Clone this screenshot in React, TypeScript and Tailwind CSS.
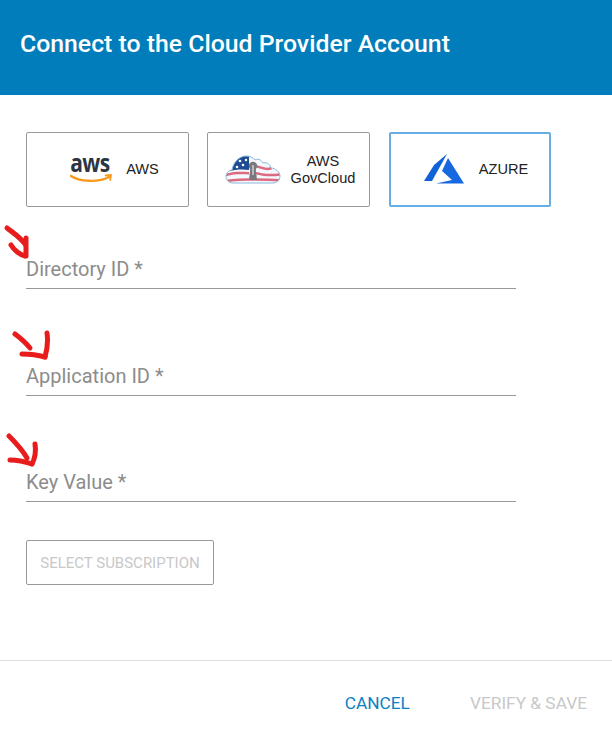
const roboto = "font-['Roboto',sans-serif]";

function AwsLogo() {
  return (
    <div className="relative w-[42px] h-[32px]">
      <span className="absolute left-0 top-[-2px] origin-bottom scale-y-[1.2] font-['Open_Sans',sans-serif] font-bold text-[21px] leading-[26px] tracking-[-0.5px] text-[#2b3544]">aws</span>
      <svg className="absolute left-0 top-[18px]" width="44" height="13" viewBox="0 0 44 13" fill="none">
        <path d="M1 4C9 9.500 28 11 39 5" stroke="#f79a1e" strokeWidth="2.400" strokeLinecap="round" />
        <path d="M35.500 3.500L41 3L40.200 8" stroke="#f79a1e" strokeWidth="1.800" strokeLinecap="round" strokeLinejoin="round" />
      </svg>
    </div>
  );
}

function GovCloudLogo() {
  return (
    <svg width="56" height="32" viewBox="0 0 56 32">
      <defs>
        <clipPath id="cloud">
          <path d="M8 29C3 29 1 25 1 22.500C1 19 4 16.500 7 16C8 9 14 2 21 2C25 2 28 3.500 30 6C32 4.500 36 5 38 9C40 8 45 9 46 14C50 14 55 18 55 22C55 27 51 29 48 29Z" />
        </clipPath>
      </defs>
      <path d="M8 29C3 29 1 25 1 22.500C1 19 4 16.500 7 16C8 9 14 2 21 2C25 2 28 3.500 30 6C32 4.500 36 5 38 9C40 8 45 9 46 14C50 14 55 18 55 22C55 27 51 29 48 29Z" fill="#f4f7fb" />
      <g clipPath="url(#cloud)">
        <path d="M0 20C10 17 18 18 24 18V20.500C18 20.500 10 19.500 0 22.500Z" fill="#dc6a80" />
        <path d="M0 26C14 24 36 24 56 25V27.500C36 26.500 14 26.500 0 28.500Z" fill="#dc6a80" />
        <path d="M31 11C36 12 40 15 46 13L47 15.500C40 17.500 36 14.500 31 13.500Z" fill="#dc6a80" />
        <path d="M31 18C36 19 44 21 56 19V21.500C44 23.500 36 21.500 31 20.500Z" fill="#dc6a80" />
        <path d="M24 1H10L4 17C10 15.500 18 15 24 16Z" fill="#1f4b93" />
        <circle cx="12" cy="13" r="1.300" fill="#fff" />
        <circle cx="18" cy="11" r="1.300" fill="#fff" />
        <circle cx="15" cy="7" r="1.300" fill="#fff" />
        <circle cx="21" cy="6" r="1.200" fill="#fff" />
      </g>
      <path d="M8 29C3 29 1 25 1 22.500C1 19 4 16.500 7 16C8 9 14 2 21 2C25 2 28 3.500 30 6C32 4.500 36 5 38 9C40 8 45 9 46 14C50 14 55 18 55 22C55 27 51 29 48 29Z" fill="none" stroke="#8ab8dc" strokeWidth="1" />
      <circle cx="28" cy="12" r="4.200" fill="#77797c" />
      <path d="M25.500 13L24 26H32L30.500 13Z" fill="#77797c" />
      <rect x="27.200" y="11" width="1.600" height="10" fill="#c9cacc" />
    </svg>
  );
}

function AzureLogo() {
  return (
    <svg width="40" height="31" viewBox="0 0 40 31">
      <path d="M23 0L10 11L0 27H8Z" fill="#0f62d8" />
      <path d="M24 4L18 17L28 26L12 29.500H40Z" fill="#1668e0" />
    </svg>
  );
}

function RedArrow({ className, d }: { className: string; d: string[] }) {
  return (
    <svg className={`absolute ${className}`} width="40" height="40" viewBox="0 0 40 40" fill="none">
      {d.map((p, i) => (
        <path key={i} d={p} stroke="#e81c1c" strokeWidth="5" strokeLinecap="round" strokeLinejoin="round" />
      ))}
    </svg>
  );
}

function ProviderButton({ selected, logo, label, cls }: { selected?: boolean; logo: React.ReactNode; label: React.ReactNode; cls: string }) {
  return (
    <button
      className={`h-[75px] bg-white rounded-[2px] flex items-center justify-center ${cls} text-[14.6px] leading-[17px] text-[#222] font-['Liberation_Sans',sans-serif] ${
        selected ? 'border-2 border-[#66aee3]' : 'border border-[#999]'
      }`}
    >
      {logo}
      {label}
    </button>
  );
}

function Field({ label, height }: { label: string; height: string }) {
  return (
    <div className={`w-[490px] ${height} flex items-end border-b border-[#999] pb-[7px]`}>
      <span className="text-[20px] leading-[24px] text-[#8c8c8c]">{label}</span>
    </div>
  );
}

export default function App() {
  return (
    <div className={`relative w-[612px] h-[742px] bg-white flex flex-col ${roboto}`}>
      <div className="h-[95px] bg-[#007dba] flex items-center px-5">
        <h1 className="text-[24.8px] font-medium text-white pb-[8px]">Connect to the Cloud Provider Account</h1>
      </div>

      <div className="h-[566px] px-[26px] pt-[37px] border-b border-[#dedede]">
        <div className="flex">
          <ProviderButton logo={<AwsLogo />} label="AWS" cls="w-[163px] gap-[14px] pl-[14px]" />
          <div className="w-[18px]" />
          <ProviderButton
            logo={<GovCloudLogo />}
            label={<span className="text-center pt-px">AWS<br />GovCloud</span>}
            cls="w-[163px] gap-[10px] pl-[3px]"
          />
          <div className="w-[19px]" />
          <ProviderButton selected logo={<AzureLogo />} label="AZURE" cls="w-[162px] gap-[15px] pl-[12px]" />
        </div>

        <Field label="Directory ID *" height="h-[82px]" />
        <Field label="Application ID *" height="h-[107px]" />
        <Field label="Key Value *" height="h-[106px]" />

        <button className="mt-[38px] w-[188px] h-[45px] pt-px border border-[#999] rounded-[2px] text-[15px] text-[#c8c8c8] bg-white">
          SELECT SUBSCRIPTION
        </button>
      </div>

      <div className="flex-1 flex items-center justify-end pr-[25px] pt-[4px] gap-[60px] text-[17.3px]">
        <button className="text-[#0a82c4]">CANCEL</button>
        <button className="text-[#c8c8c8]">VERIFY &amp; SAVE</button>
      </div>

      <RedArrow className="left-0 top-[220px]" d={['M7 8C12 12 20 17 25 24', 'M26 18L26 36', 'M11 25C14 30 20 35 25 36']} />
      <RedArrow className="left-[10px] top-[328px]" d={['M5 6C9 9 16 15 20 20', 'M12 26C20 26 28 27 35 29', 'M37 5C38 12 37 22 35 29']} />
      <RedArrow className="left-[6px] top-[430px]" d={['M3 6C9 12 17 21 21 28', 'M4 30C12 30 20 32 26 34', 'M29 14C30 20 29 28 26 34']} />
    </div>
  );
}
